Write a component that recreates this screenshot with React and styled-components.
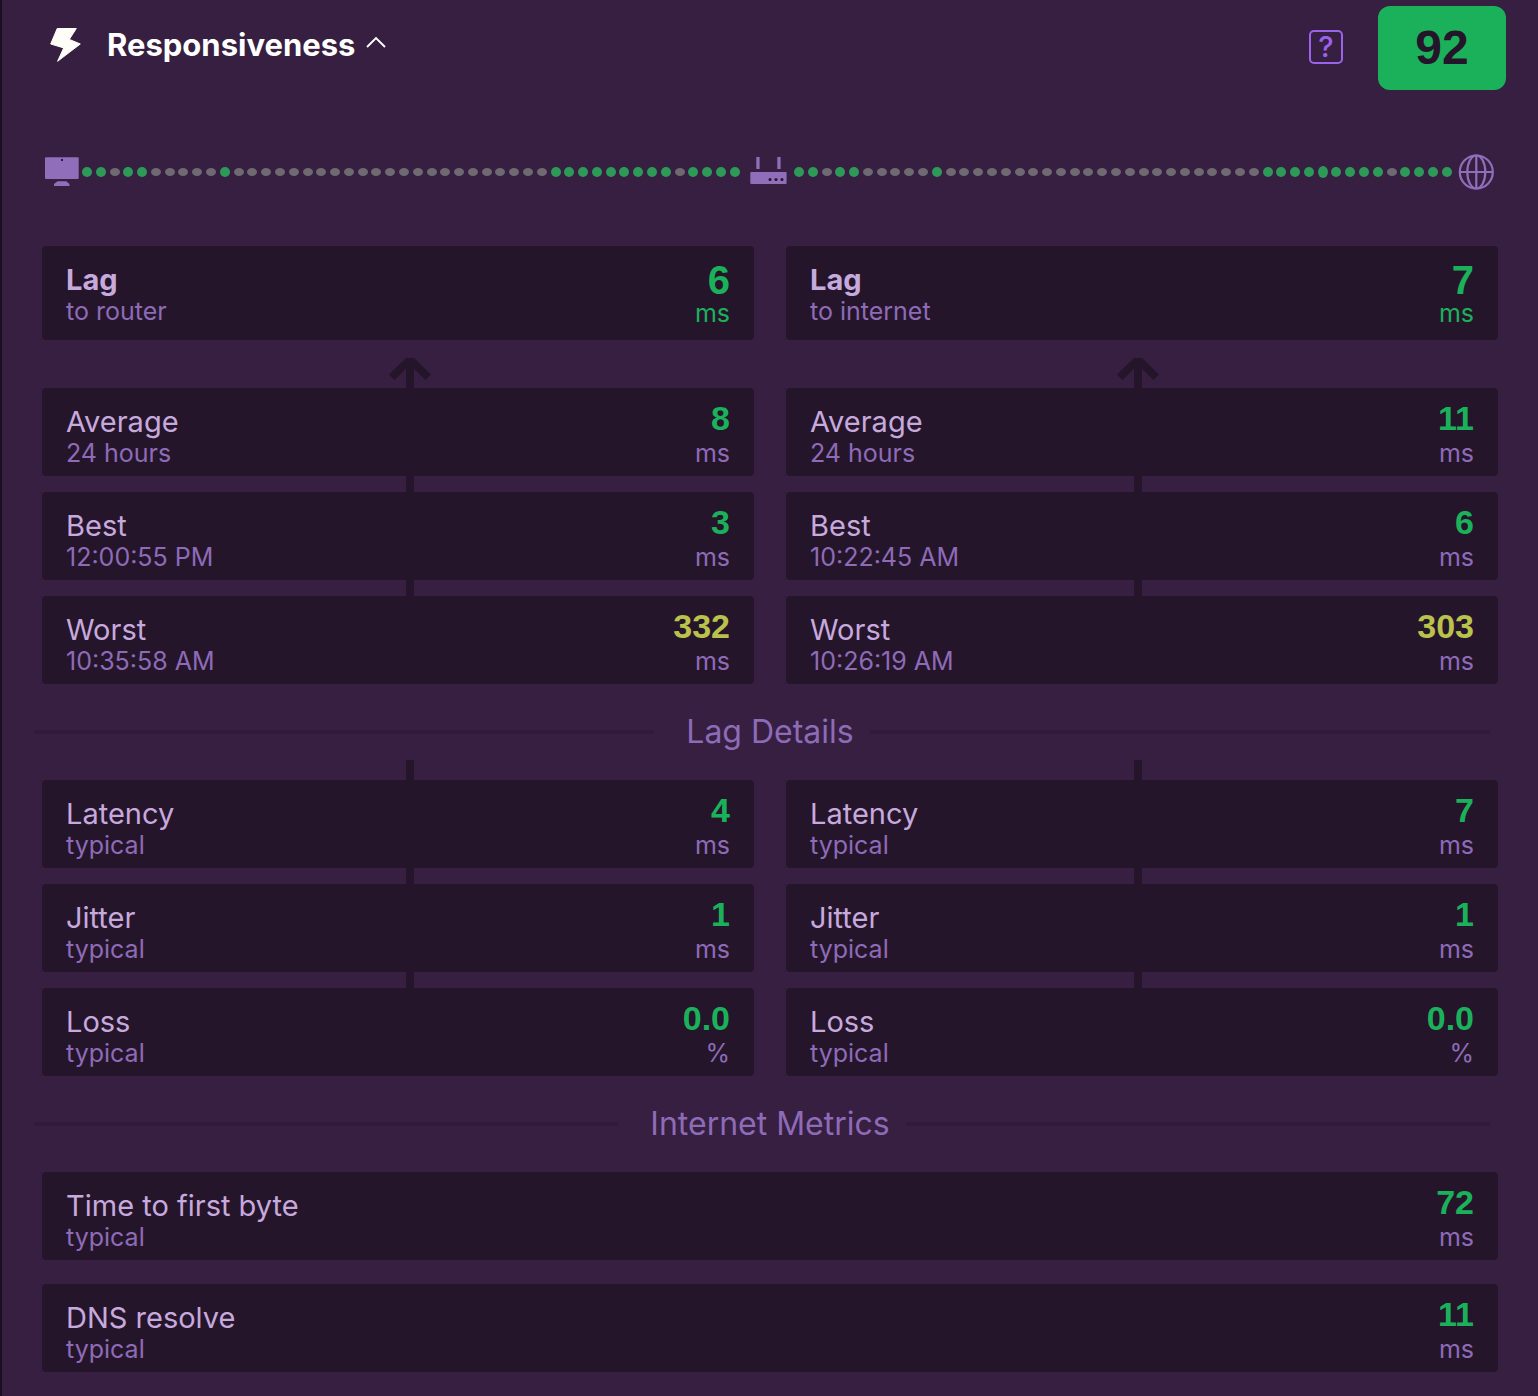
import React, { useState } from "react";
import styled, { createGlobalStyle, css } from "styled-components";

const color = {
  edge: "#1a0e20",
  page: "#361f41",
  card: "#25152b",
  rule: "#321b3a",
  label: "#c7aadd",
  muted: "#8e6bb7",
  icon: "#906eb9",
  accent: "#9b63ea",
  good: "#1bb15a",
  fair: "#b9c24a",
  dotOn: "#2d9a58",
  dotOff: "#6f6972",
  light: "#fffdf8",
};

const GlobalStyle = createGlobalStyle`
  * { box-sizing: border-box; }
  body {
    margin: 0;
    background: ${color.page};
    font-family: Inter, "Liberation Sans", sans-serif;
  }
  button { font-family: inherit; }
`;

const Page = styled.main`
  border-left: 2px solid ${color.edge};
  background: ${color.page};
  padding: 6px 32px 24px 40px;
`;

const Header = styled.header`
  display: flex;
  align-items: center;
  justify-content: space-between;
  height: 84px;
`;

const Heading = styled.h1`
  margin: 0;
  padding-bottom: 6px;
`;

const Toggle = styled.button`
  display: flex;
  align-items: center;
  border: 0;
  padding: 0 0 0 5px;
  background: none;
  color: #ffffff;
  font-size: 31px;
  font-weight: 700;
  line-height: 40px;
  cursor: pointer;
`;

const ToggleText = styled.span`
  padding: 0 9px 0 24px;
`;

const Actions = styled.div`
  display: flex;
  align-items: center;
  gap: 35px;
`;

const Help = styled.button`
  width: 34px;
  height: 34px;
  margin-bottom: 2px;
  padding: 0;
  border: 2px solid ${color.accent};
  border-radius: 5px;
  background: none;
  color: ${color.accent};
  font-size: 29px;
  font-weight: 500;
  line-height: 30px;
  cursor: pointer;
`;

const Score = styled.div`
  width: 128px;
  height: 84px;
  border-radius: 12px;
  background: ${color.good};
  color: ${color.card};
  font-family: "Liberation Sans", Arial, sans-serif;
  font-size: 48px;
  font-weight: 700;
  line-height: 84px;
  text-align: center;
`;

const Body = styled.div`
  margin-right: 8px;
`;

const Route = styled.div`
  display: flex;
  align-items: center;
  padding: 62px 0 54px;

  svg { flex: none; }
`;

const Dots = styled.div`
  display: flex;
  flex: 1;
  align-items: center;
  justify-content: space-between;
`;

const Dot = styled.span`
  width: 10px;
  height: ${(p) => p.$height}px;
  border-radius: 50%;
  background: ${(p) => (p.$on ? color.dotOn : color.dotOff)};
`;

const Row = styled.div`
  display: grid;
  grid-template-columns: repeat(${(p) => p.$columns}, 1fr);
  gap: 32px;
`;

const Card = styled.article`
  display: flex;
  align-items: flex-end;
  justify-content: space-between;
  height: ${(p) => (p.$large ? 94 : 88)}px;
  padding: 0 24px ${(p) => (p.$large ? 12 : 8)}px;
  border-radius: 4px;
  background: ${color.card};
`;

const Labels = styled.div`
  padding-bottom: ${(p) => (p.$large ? 2 : 0)}px;
`;

const Name = styled.h3`
  margin: 0;
  color: ${color.label};
  font-size: 29px;
  font-weight: ${(p) => (p.$large ? 700 : 400)};
  line-height: 32px;
`;

const small = css`
  color: ${color.muted};
  font-size: 25px;
  font-weight: 400;
  line-height: 30px;
`;

const Note = styled.div`
  ${small}
`;

const Reading = styled.div`
  text-align: right;
`;

const Value = styled.div`
  color: ${(p) => color[p.$tone]};
  font-family: "Liberation Sans", Arial, sans-serif;
  font-size: ${(p) => (p.$large ? 40 : 34)}px;
  font-weight: 700;
  line-height: ${(p) => (p.$large ? 36 : 40)}px;
`;

const Unit = styled.div`
  ${small}
  ${(p) => p.$large && css`color: ${color.good};`}
`;

const Connectors = styled.div`
  display: grid;
  grid-template-columns: 1fr 1fr;
  align-items: end;
  justify-items: center;
  height: ${(p) => p.$height}px;
  margin: 0 -4px 0 4px;
`;

const Stem = styled.span`
  width: 8px;
  height: 100%;
  background: ${color.card};
`;

const Divider = styled.h2`
  display: flex;
  align-items: center;
  margin: 0 8px 0 -8px;
  padding: 28px 0 ${(p) => (p.$joined ? 8 : 28)}px;
  color: ${color.muted};
  font-size: 32px;
  font-weight: 400;
  line-height: 40px;

  &::before,
  &::after {
    content: "";
    flex: 1;
    height: 4px;
    background: ${color.rule};
  }
  &::before { margin-right: 32px; }
  &::after { margin-left: 16px; }
`;

const Stack = styled.div`
  display: grid;
  gap: 24px;
`;

function BoltIcon() {
  return (
    <svg width="36" height="40" viewBox="0 0 36 40" fill={color.light} stroke={color.light} strokeLinejoin="round" aria-hidden="true">
      <path d="M10.200 3.500H29.300L22.300 14.400L33.300 19L10.600 36.300L16.700 22.900L3.700 19Z" />
    </svg>
  );
}

function ChevronIcon() {
  return (
    <svg width="24" height="24" viewBox="0 0 24 24" fill="none" stroke="#fff" strokeWidth="1.900" aria-hidden="true">
      <path d="M3 14L12 5L21 14" />
    </svg>
  );
}

function DesktopIcon() {
  return (
    <svg width="40" height="40" viewBox="0 0 40 40" fill={color.icon} role="img" aria-label="Computer">
      <rect x="3" y="5.300" width="33.700" height="21.700" rx="1" />
      <rect x="19" y="7" width="1.800" height="2" fill={color.card} />
      <path d="M15.500 29.300H24.200L27.500 32V34H12V32Z" />
    </svg>
  );
}

function RouterIcon() {
  return (
    <svg width="54" height="40" viewBox="0 0 54 40" fill={color.icon} role="img" aria-label="Router">
      <rect x="16.300" y="5" width="3.300" height="12" />
      <rect x="37.300" y="5" width="3.300" height="12" />
      <rect x="10.300" y="20" width="36.300" height="12" rx="1" />
      <g fill={color.card}>
        <circle cx="30" cy="27.500" r="1.500" />
        <circle cx="36" cy="27.500" r="1.500" />
        <circle cx="42" cy="27.500" r="1.500" />
      </g>
    </svg>
  );
}

function GlobeIcon() {
  return (
    <svg width="46" height="40" viewBox="0 0 46 40" fill="none" stroke={color.icon} strokeWidth="2.200" role="img" aria-label="Internet">
      <circle cx="24.300" cy="20" r="16.500" />
      <ellipse cx="24.300" cy="20" rx="9" ry="16.500" />
      <path d="M24.300 3.500V36.500M7.800 20H40.800" />
    </svg>
  );
}

function ArrowIcon() {
  return (
    <svg width="44" height="30" viewBox="0 0 44 30" fill={color.card} aria-hidden="true">
      <path d="M18 0H26L43 16.500L37.500 22L26 11V30H18V11L6.500 22L1 16.500Z" />
    </svg>
  );
}

// Samples with traffic are lit; the rest of the 48 are idle.
const SAMPLES = Array.from({ length: 48 }, (_, i) => {
  const on = [0, 1, 3, 4, 10].includes(i) || (i >= 34 && i !== 43);
  return { on, height: on ? 10 : 8 };
});
const TO_ROUTER = SAMPLES;
const TO_INTERNET = SAMPLES.map((s, i) => (i === 38 ? { on: true, height: 12 } : s));

function Trail({ samples }) {
  return (
    <Dots>
      {samples.map((s, i) => (
        <Dot key={i} $on={s.on} $height={s.height} />
      ))}
    </Dots>
  );
}

function Metric({ name, note, value, unit = "ms", tone = "good", large = false }) {
  return (
    <Card $large={large}>
      <Labels $large={large}>
        <Name $large={large}>{name}</Name>
        <Note>{note}</Note>
      </Labels>
      <Reading>
        <Value $tone={tone} $large={large}>{value}</Value>
        <Unit $large={large}>{unit}</Unit>
      </Reading>
    </Card>
  );
}

function Metrics({ items }) {
  return (
    <Row $columns={items.length}>
      {items.map((m, i) => (
        <Metric key={i} {...m} />
      ))}
    </Row>
  );
}

function Joint({ height = 16 }) {
  return (
    <Connectors $height={height}>
      <Stem />
      <Stem />
    </Connectors>
  );
}

function MetricGroup({ rows }) {
  return rows.map((items, i) => (
    <React.Fragment key={i}>
      {i > 0 && <Joint />}
      <Metrics items={items} />
    </React.Fragment>
  ));
}

const LAG = [
  { name: "Lag", note: "to router", value: "6", large: true },
  { name: "Lag", note: "to internet", value: "7", large: true },
];

const HISTORY = [
  [
    { name: "Average", note: "24 hours", value: "8" },
    { name: "Average", note: "24 hours", value: "11" },
  ],
  [
    { name: "Best", note: "12:00:55 PM", value: "3" },
    { name: "Best", note: "10:22:45 AM", value: "6" },
  ],
  [
    { name: "Worst", note: "10:35:58 AM", value: "332", tone: "fair" },
    { name: "Worst", note: "10:26:19 AM", value: "303", tone: "fair" },
  ],
];

const DETAILS = [
  [
    { name: "Latency", note: "typical", value: "4" },
    { name: "Latency", note: "typical", value: "7" },
  ],
  [
    { name: "Jitter", note: "typical", value: "1" },
    { name: "Jitter", note: "typical", value: "1" },
  ],
  [
    { name: "Loss", note: "typical", value: "0.0", unit: "%" },
    { name: "Loss", note: "typical", value: "0.0", unit: "%" },
  ],
];

export default function App() {
  const [open, setOpen] = useState(true);
  return (
    <>
      <GlobalStyle />
      <Page>
        <Header>
          <Heading>
            <Toggle type="button" aria-expanded={open} onClick={() => setOpen(!open)}>
              <BoltIcon />
              <ToggleText>Responsiveness</ToggleText>
              <ChevronIcon />
            </Toggle>
          </Heading>
          <Actions>
            <Help type="button">?</Help>
            <Score>92</Score>
          </Actions>
        </Header>
        {open && (
          <Body>
            <Route>
              <DesktopIcon />
              <Trail samples={TO_ROUTER} />
              <RouterIcon />
              <Trail samples={TO_INTERNET} />
              <GlobeIcon />
            </Route>
            <Metrics items={LAG} />
            <Connectors $height={48}>
              <ArrowIcon />
              <ArrowIcon />
            </Connectors>
            <MetricGroup rows={HISTORY} />
            <Divider $joined>Lag Details</Divider>
            <Joint height={20} />
            <MetricGroup rows={DETAILS} />
            <Divider>Internet Metrics</Divider>
            <Stack>
              <Metric name="Time to first byte" note="typical" value="72" />
              <Metric name="DNS resolve" note="typical" value="11" />
            </Stack>
          </Body>
        )}
      </Page>
    </>
  );
}
